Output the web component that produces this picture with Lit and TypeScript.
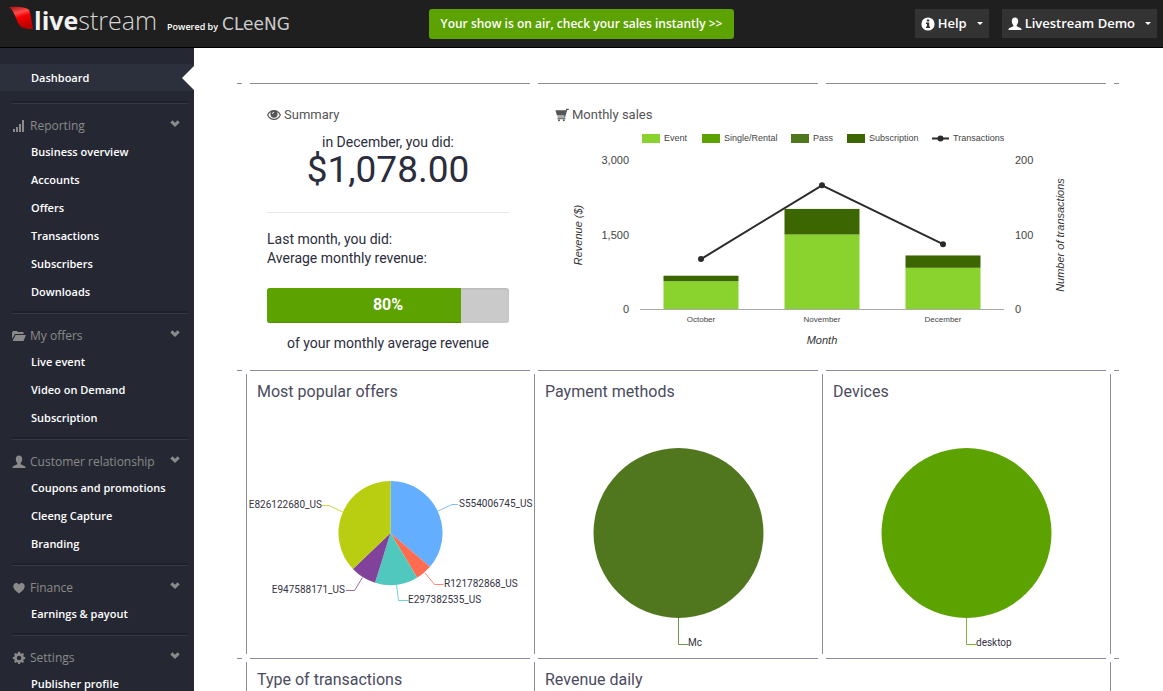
import { LitElement, html, svg, css, nothing } from "lit";
import { customElement, property, state } from "lit/decorators.js";
import { classMap } from "lit/directives/class-map.js";

const icons: Record<string, { box: string; shape: unknown }> = {
  signal: {
    box: "0 0 14 14",
    shape: svg`<path d="M1 10h2v3H1zM4 8h2v5H4zM7 5h2v8H7zM10 1h2v12h-2z" />`,
  },
  folder: {
    box: "0 0 14 14",
    shape: svg`<path d="M0 10V4l1-2h4l1 1h5.500v2H3z" /><path d="M3.500 6H14l-2.500 6H.6z" />`,
  },
  user: {
    box: "0 0 14 14",
    shape: svg`<path d="M7 .5c2 0 3.200 1.500 3.200 3.500 0 1.700-.6 3-1.500 3.900v1.300l3.800 1.700c.8.400 1 .9 1 2.100H.5c0-1.200.2-1.700 1-2.100l3.800-1.700V7.900C4.400 7 3.800 5.700 3.800 4 3.800 2 5 .5 7 .5z" />`,
  },
  heart: {
    box: "0 0 14 14",
    shape: svg`<path d="M7 12.600C3 9.600 1.300 7.400 1.300 5.200 1.300 3.300 2.600 2 4.200 2c1.200 0 2.200.6 2.800 1.700C7.600 2.600 8.600 2 9.800 2c1.600 0 2.900 1.300 2.900 3.200 0 2.200-1.700 4.400-5.700 7.400z" />`,
  },
  cog: {
    box: "0 0 14 14",
    shape: svg`<path fill-rule="evenodd" d="M6 1.500h2l.3 1.600 1.200.5 1.400-.9 1.400 1.400-.9 1.400.5 1.200 1.600.3v2l-1.600.3-.5 1.200.9 1.300-1.400 1.400-1.400-.9-1.200.5L8 14.400H6l-.3-1.600-1.200-.5-1.400.9-1.400-1.400.9-1.300-.5-1.200L.5 9V7l1.600-.3.5-1.200-.9-1.400 1.400-1.400 1.400.9 1.200-.5zM7 5.600a2.400 2.400 0 1 0 0 4.800 2.400 2.400 0 0 0 0-4.800z" transform="translate(.4 -.6) scale(.95)" />`,
  },
  chevron: {
    box: "0 0 10 7",
    shape: svg`<path d="M.3 2.600 2.400.3 5 2.700 7.600.3l2.100 2.300L5 6.900z" />`,
  },
  info: {
    box: "0 0 14 14",
    shape: svg`<path fill-rule="evenodd" d="M7 .4a6.600 6.600 0 1 0 0 13.200A6.600 6.600 0 0 0 7 .4zM5.900 2.500h2.300v1.900H5.900zM5 5.400h3.200v4.200H9v1.500H5V9.600h1V6.900H5z" />`,
  },
  caret: {
    box: "0 0 6 3",
    shape: svg`<path d="M0 0h6L3 3z" />`,
  },
  eye: {
    box: "0 0 14 12",
    shape: svg`<path fill-rule="evenodd" d="M7 1c3 0 5.500 1.800 7 5-1.500 3.200-4 5-7 5S1.500 9.200 0 6c1.500-3.200 4-5 7-5zM1.300 6C2.600 8.500 4.600 9.800 7 9.800S11.400 8.500 12.700 6c-.7-1.300-1.600-2.300-2.700-3 .4.600.6 1.300.6 2.100a3.600 3.600 0 0 1-7.200 0c0-.8.200-1.500.6-2.100-1.100.7-2 1.700-2.700 3zM5 4.600c.3-1 1-1.700 2-1.900l.2.900c-.7.200-1.200.6-1.400 1.300z" />`,
  },
  cart: {
    box: "0 0 14 14",
    shape: svg`<path d="M13.800.8v1.100h-1.600L10 9.600H2.600V8.400h6.500l.2-.9H2L.4 2.200h10.300l.5-1.400z" /><path d="M2.500 10.200h8v1h-8z" /><circle cx="4" cy="12.300" r="1" /><circle cx="8.800" cy="12.300" r="1" />`,
  },
};

@customElement("ui-icon")
export class UiIcon extends LitElement {
  @property() name = "";

  static styles = css`
    :host {
      display: inline-flex;
      width: 14px;
      flex: none;
    }
    .glyph {
      display: block;
      width: 100%;
      fill: currentColor;
    }
  `;

  render() {
    const icon = icons[this.name];
    return icon
      ? html`<svg class="glyph" viewBox=${icon.box} aria-hidden="true">${icon.shape}</svg>`
      : nothing;
  }
}

@customElement("top-bar")
export class TopBar extends LitElement {
  static styles = css`
    :host {
      display: grid;
      grid-template-columns: 1fr auto 1fr;
      align-items: center;
      height: 47px;
      background: #1f1f1f;
      border-bottom: 1px solid #000;
      color: #fff;
      font-family: "Open Sans", sans-serif;
    }
    .brand {
      display: flex;
      align-items: baseline;
      padding-left: 9px;
      color: #fff;
      text-decoration: none;
      line-height: 36px;
      white-space: nowrap;
    }
    .flag {
      width: 25px;
      height: 23px;
      align-self: flex-start;
      margin-top: 4px;
    }
    .word {
      font-size: 25px;
      font-weight: 300;
      color: #d8d8d8;
    }
    .word b {
      font-weight: 700;
      color: #f2f2f2;
    }
    .by {
      margin: 0 4px 0 10px;
      font-size: 9px;
      font-weight: 600;
    }
    .cleeng {
      font-family: "DejaVu Sans", sans-serif;
      font-size: 17px;
      color: #ccc;
    }
    .notice {
      height: 30px;
      padding: 0 12px;
      border: 0;
      border-radius: 3px;
      background: #5ca200;
      color: #fff;
      font: 600 12px/30px "Open Sans", sans-serif;
    }
    .tools {
      display: flex;
      justify-content: flex-end;
      gap: 13px;
      padding-right: 6px;
    }
    .tool {
      display: flex;
      align-items: center;
      gap: 3px;
      height: 29px;
      padding: 0 6px;
      border: 0;
      background: #333;
      color: #fff;
      font: 600 13px/29px "Open Sans", sans-serif;
    }
    .caret {
      width: 6px;
      margin-left: 7px;
    }
  `;

  render() {
    return html`
      <a class="brand" href="#home">
        <svg class="flag" viewBox="0 0 25 23" aria-hidden="true">
          <defs>
            <linearGradient id="red" x1="0" y1="0" x2="0.300" y2="1">
              <stop offset="0" stop-color="#a80f0f" />
              <stop offset="0.350" stop-color="#ff4a4a" />
              <stop offset="0.550" stop-color="#f60000" />
              <stop offset="1" stop-color="#b80000" />
            </linearGradient>
          </defs>
          <path
            d="M0 1c7-.5 14 0 18 1.500 2 1 3 2.500 3.300 5L24 23c-5 0-10-.3-12.500-2.500C7.500 17 6 5 0 1z"
            fill="url(#red)"
          />
        </svg>
        <span class="word"><b>live</b>stream</span>
        <span class="by">Powered by</span>
        <span class="cleeng">CLeeNG</span>
      </a>
      <button class="notice">Your show is on air, check your sales instantly &gt;&gt;</button>
      <div class="tools">
        <button class="tool">
          <ui-icon name="info"></ui-icon>Help<ui-icon class="caret" name="caret"></ui-icon>
        </button>
        <button class="tool">
          <ui-icon name="user"></ui-icon>Livestream Demo<ui-icon class="caret" name="caret"></ui-icon>
        </button>
      </div>
    `;
  }
}

const sections = [
  {
    icon: "signal",
    title: "Reporting",
    links: ["Business overview", "Accounts", "Offers", "Transactions", "Subscribers", "Downloads"],
  },
  { icon: "folder", title: "My offers", links: ["Live event", "Video on Demand", "Subscription"] },
  {
    icon: "user",
    title: "Customer relationship",
    links: ["Coupons and promotions", "Cleeng Capture", "Branding"],
  },
  { icon: "heart", title: "Finance", links: ["Earnings & payout"] },
  { icon: "cog", title: "Settings", links: ["Publisher profile"] },
];

@customElement("side-nav")
export class SideNav extends LitElement {
  @state() closed: string[] = [];

  static styles = css`
    :host {
      display: block;
      background: #252833;
      font-family: "Open Sans", sans-serif;
      padding-top: 16px;
      overflow: hidden;
    }
    .current {
      display: flex;
      justify-content: space-between;
      align-items: center;
      height: 27px;
      margin-bottom: 10px;
      padding-left: 31px;
      background: #2b303c;
      color: #fff;
      font-size: 11px;
      font-weight: 600;
      text-decoration: none;
    }
    .pointer {
      border: 12px solid transparent;
      border-left: 0;
      border-right-color: #fff;
    }
    .section {
      margin: 0 6px 0 12px;
      padding-bottom: 5px;
      border-top: 2px solid #1e2129;
    }
    .head {
      display: flex;
      align-items: center;
      gap: 4px;
      width: 100%;
      height: 35px;
      padding: 9px 8px 0 0;
      border: 0;
      border-top: 1px solid #363a44;
      background: none;
      color: #8a8a8a;
      font: 400 12px/18px "Open Sans", sans-serif;
      text-align: left;
      white-space: nowrap;
    }
    .title {
      flex: 1;
    }
    .chevron {
      width: 10px;
      align-self: flex-start;
      margin-top: 7px;
    }
    .links {
      margin: 0;
      padding: 0 0 0 19px;
      list-style: none;
    }
    .link {
      display: block;
      color: #fff;
      font-size: 11px;
      line-height: 28px;
      font-weight: 600;
      text-decoration: none;
    }
  `;

  private toggle(title: string) {
    this.closed = this.closed.includes(title)
      ? this.closed.filter((t) => t !== title)
      : [...this.closed, title];
  }

  render() {
    return html`
      <nav>
        <a class="current" href="#dashboard">Dashboard<span class="pointer"></span></a>
        ${sections.map((s) => {
          const open = !this.closed.includes(s.title);
          return html`
            <div class="section">
              <button class="head" aria-expanded=${open} @click=${() => this.toggle(s.title)}>
                <ui-icon name=${s.icon}></ui-icon>
                <span class="title">${s.title}</span>
                <ui-icon class="chevron" name="chevron"></ui-icon>
              </button>
              ${open
                ? html`<ul class="links">
                    ${s.links.map((l) => html`<li><a class="link" href="#">${l}</a></li>`)}
                  </ul>`
                : nothing}
            </div>
          `;
        })}
      </nav>
    `;
  }
}

const months = [
  { name: "October", event: 560, subscription: 110, transactions: 67 },
  { name: "November", event: 1500, subscription: 515, transactions: 166 },
  { name: "December", event: 830, subscription: 248, transactions: 87 },
];

const legend = [
  { x: 87, label: "Event", color: "#8ad22e" },
  { x: 147, label: "Single/Rental", color: "#5ca200" },
  { x: 236, label: "Pass", color: "#50771e" },
  { x: 292, label: "Subscription", color: "#3b6600" },
];

@customElement("sales-chart")
export class SalesChart extends LitElement {
  static styles = css`
    :host {
      display: block;
    }
    .chart {
      display: block;
      width: 100%;
      font-family: "Liberation Sans", Arial, sans-serif;
      font-size: 11px;
      fill: #444;
    }
    .key {
      font-size: 9px;
    }
    .category {
      font-size: 8px;
      text-anchor: middle;
    }
    .axis {
      font-style: italic;
      text-anchor: middle;
      fill: #333;
    }
    .left {
      text-anchor: end;
    }
    .base {
      stroke: #aaa;
    }
    .trend {
      fill: none;
      stroke: #2b2b2b;
      stroke-width: 2;
    }
    .dot {
      fill: #2b2b2b;
    }
  `;

  render() {
    const base = 183;
    const revenue = (v: number) => (v * 149) / 3000;
    const count = (v: number) => base - (v * 149) / 200;
    const center = (i: number) => 146 + i * 121;
    return html`
      <svg class="chart" viewBox="0 0 550 224" role="img" aria-label="Monthly sales">
        ${legend.map(
          (k) => svg`
            <rect x=${k.x} y="8" width="18" height="9" fill=${k.color} />
            <text class="key" x=${k.x + 22} y="15">${k.label}</text>`
        )}
        <path class="trend" d="M377 12.500h17" />
        <circle class="dot" cx="385.500" cy="12.500" r="3" />
        <text class="key" x="398" y="15">Transactions</text>
        ${[3000, 1500, 0].map(
          (v) => svg`<text class="left" x="74" y=${base + 4 - revenue(v)}>${v.toLocaleString("en-US")}</text>`
        )}
        ${[200, 100, 0].map((v) => svg`<text x="460" y=${count(v) + 4}>${v}</text>`)}
        ${months.map((m, i) => {
          const low = revenue(m.event);
          const high = revenue(m.subscription);
          return svg`
            <rect x=${center(i) - 37.5} y=${base - low} width="75" height=${low} fill="#8ad22e" />
            <rect x=${center(i) - 37.5} y=${base - low - high} width="75" height=${high} fill="#3b6600" />
            <text class="category" x=${center(i)} y="196">${m.name}</text>`;
        })}
        <path class="base" d="M85 183.500h364" />
        <polyline class="trend" points=${months.map((m, i) => `${center(i)},${count(m.transactions)}`).join(" ")} />
        ${months.map((m, i) => svg`<circle class="dot" cx=${center(i)} cy=${count(m.transactions)} r="3" />`)}
        <text class="axis" x="267" y="218">Month</text>
        <text class="axis" transform="translate(27 109) rotate(-90)">Revenue ($)</text>
        <text class="axis" transform="translate(509 109) rotate(-90)">Number of transactions</text>
      </svg>
    `;
  }
}

interface Slice {
  label: string;
  color: string;
  from: number;
  to: number;
  leader: string;
  x: number;
  y: number;
  end?: boolean;
}

const offers: Slice[] = [
  { label: "S554006745_US", color: "#64aeff", from: 0, to: 130.6, leader: "M191 97 205 90.5h6", x: 212, y: 93 },
  { label: "R121782868_US", color: "#ff6c4f", from: 130.6, to: 149.2, leader: "M178 159l9.500 11.500h9", x: 197, y: 173 },
  { label: "E297382535_US", color: "#51c8be", from: 149.2, to: 197.3, leader: "M149.500 170.500l2 16h10", x: 161, y: 189 },
  { label: "E947588171_US", color: "#80429b", from: 197.3, to: 226.3, leader: "M115.500 163.500l-8 13H99", x: 98, y: 179, end: true },
  { label: "E826122680_US", color: "#bace11", from: 226.3, to: 360, leader: "M95.500 98 82 91.500H75", x: 75, y: 94, end: true },
];

const whole = (label: string, color: string): Slice[] => [
  { label, color, from: 0, to: 360, leader: "M143.500 204v26.500h10", x: 153, y: 232 },
];

@customElement("pie-chart")
export class PieChart extends LitElement {
  @property({ attribute: false }) slices: Slice[] = [];
  @property({ type: Number }) radius = 52;

  static styles = css`
    :host {
      display: block;
    }
    .pie {
      display: block;
      width: 100%;
      overflow: visible;
      font-family: Roboto, sans-serif;
      font-size: 10px;
      fill: #333344;
    }
    .leader {
      fill: none;
      opacity: 0.8;
    }
    .end {
      text-anchor: end;
    }
  `;

  private shape(s: Slice) {
    const cx = 143.5;
    const cy = 119;
    const r = this.radius;
    if (s.to - s.from === 360) return svg`<circle cx=${cx} cy=${cy} r=${r} fill=${s.color} />`;
    const at = (deg: number) => {
      const a = (deg * Math.PI) / 180;
      return `${cx + r * Math.sin(a)} ${cy - r * Math.cos(a)}`;
    };
    return svg`<path d=${`M${cx} ${cy}L${at(s.from)}A${r} ${r} 0 0 1 ${at(s.to)}Z`} fill=${s.color} />`;
  }

  render() {
    return html`
      <svg class="pie" viewBox="0 0 287 240">
        ${this.slices.map(
          (s) => svg`
            ${this.shape(s)}
            <path class="leader" d=${s.leader} stroke=${s.color} />
            <text class=${classMap({ end: !!s.end })} x=${s.x} y=${s.y}>${s.label}</text>`
        )}
      </svg>
    `;
  }
}

@customElement("app-root")
export class AppRoot extends LitElement {
  static styles = css`
    :host {
      display: flex;
      flex-direction: column;
      height: 100vh;
      background: #fff;
      color: #2b2d3c;
      font: 14px/19px Roboto, sans-serif;
    }
    .body {
      flex: 1;
      min-height: 0;
      display: grid;
      grid-template-columns: 194px 1fr;
    }
    .main {
      min-width: 0;
      padding: 35px 40px 0;
      overflow-y: auto;
      scrollbar-width: none;
    }
    .board {
      max-width: 883px;
      margin: 0 auto;
    }
    .rule {
      display: grid;
      grid-template-columns: 5px 1fr 1fr 1fr 5px;
      gap: 8px;
      margin-right: 1px;
    }
    .dash {
      height: 1px;
      background: #8c8b9c;
    }
    .row {
      display: grid;
      grid-template-columns: 1fr 1fr 1fr;
      margin: 3px 10px 4px 9px;
    }
    .open {
      margin-bottom: 3px;
    }
    .cell {
      box-sizing: border-box;
      min-width: 0;
      min-height: 280px;
      border-left: 1px solid #8c8b9c;
    }
    .cell:last-child {
      border-right: 1px solid #8c8b9c;
      margin-right: -1px;
    }
    .open .cell {
      border-color: transparent;
    }
    .wide {
      grid-column: span 2;
    }
    .name {
      margin: 0;
      padding: 7px 10px 12px;
      color: #4b4b60;
      font-size: 16px;
      line-height: 21px;
      font-weight: 400;
    }
    .summary {
      padding: 18px 25px 0 20px;
    }
    .sales {
      padding: 18px 5px 0 20px;
    }
    .label {
      display: flex;
      align-items: center;
      gap: 3px;
      margin: 0;
      color: #555;
      font-size: 13px;
      line-height: 19px;
      font-weight: 400;
    }
    .sales .label {
      margin-bottom: 2px;
    }
    .center {
      margin: 0;
      text-align: center;
    }
    .month {
      padding-top: 9px;
    }
    .amount {
      margin: 0;
      padding-bottom: 24px;
      border-bottom: 1px solid #e8e8e8;
      font-size: 37px;
      line-height: 36px;
      text-align: center;
    }
    .past {
      margin: 17px 0 20px;
    }
    .meter {
      display: grid;
      height: 35px;
      margin-bottom: 11px;
      border-radius: 3px;
      overflow: hidden;
      background: #cacaca;
      box-shadow: inset 0 1px 2px rgba(0, 0, 0, 0.1);
    }
    .fill,
    .value {
      grid-area: 1 / 1;
    }
    .fill {
      background: #5ca200;
      box-shadow: inset 0 -1px 0 rgba(0, 0, 0, 0.12);
    }
    .value {
      color: #fff;
      font-size: 16px;
      line-height: 33px;
      font-weight: 700;
      text-align: center;
    }
  `;

  private rule() {
    return html`<div class="rule">${[0, 1, 2, 3, 4].map(() => html`<span class="dash"></span>`)}</div>`;
  }

  render() {
    const share = 80;
    return html`
      <top-bar></top-bar>
      <div class="body">
        <side-nav></side-nav>
        <main class="main">
          <div class="board">
            ${this.rule()}
            <div class="row open">
              <section class="cell summary">
                <h2 class="label"><ui-icon name="eye"></ui-icon>Summary</h2>
                <p class="center month">in December, you did:</p>
                <p class="amount">$1,078.00</p>
                <p class="past">Last month, you did:<br />Average monthly revenue:</p>
                <div class="meter" role="progressbar" aria-valuenow=${share} aria-label="Monthly average">
                  <div class="fill" style="width:${share}%"></div>
                  <div class="value">${share}%</div>
                </div>
                <p class="center">of your monthly average revenue</p>
              </section>
              <section class="cell wide sales">
                <h2 class="label"><ui-icon name="cart"></ui-icon>Monthly sales</h2>
                <sales-chart></sales-chart>
              </section>
            </div>
            ${this.rule()}
            <div class="row">
              <section class="cell">
                <h2 class="name">Most popular offers</h2>
                <pie-chart .slices=${offers} radius="52"></pie-chart>
              </section>
              <section class="cell">
                <h2 class="name">Payment methods</h2>
                <pie-chart .slices=${whole("Mc", "#50771e")} radius="85"></pie-chart>
              </section>
              <section class="cell">
                <h2 class="name">Devices</h2>
                <pie-chart .slices=${whole("desktop", "#5ca200")} radius="85"></pie-chart>
              </section>
            </div>
            ${this.rule()}
            <div class="row">
              <section class="cell">
                <h2 class="name">Type of transactions</h2>
              </section>
              <section class="cell wide">
                <h2 class="name">Revenue daily</h2>
              </section>
            </div>
          </div>
        </main>
      </div>
    `;
  }
}
